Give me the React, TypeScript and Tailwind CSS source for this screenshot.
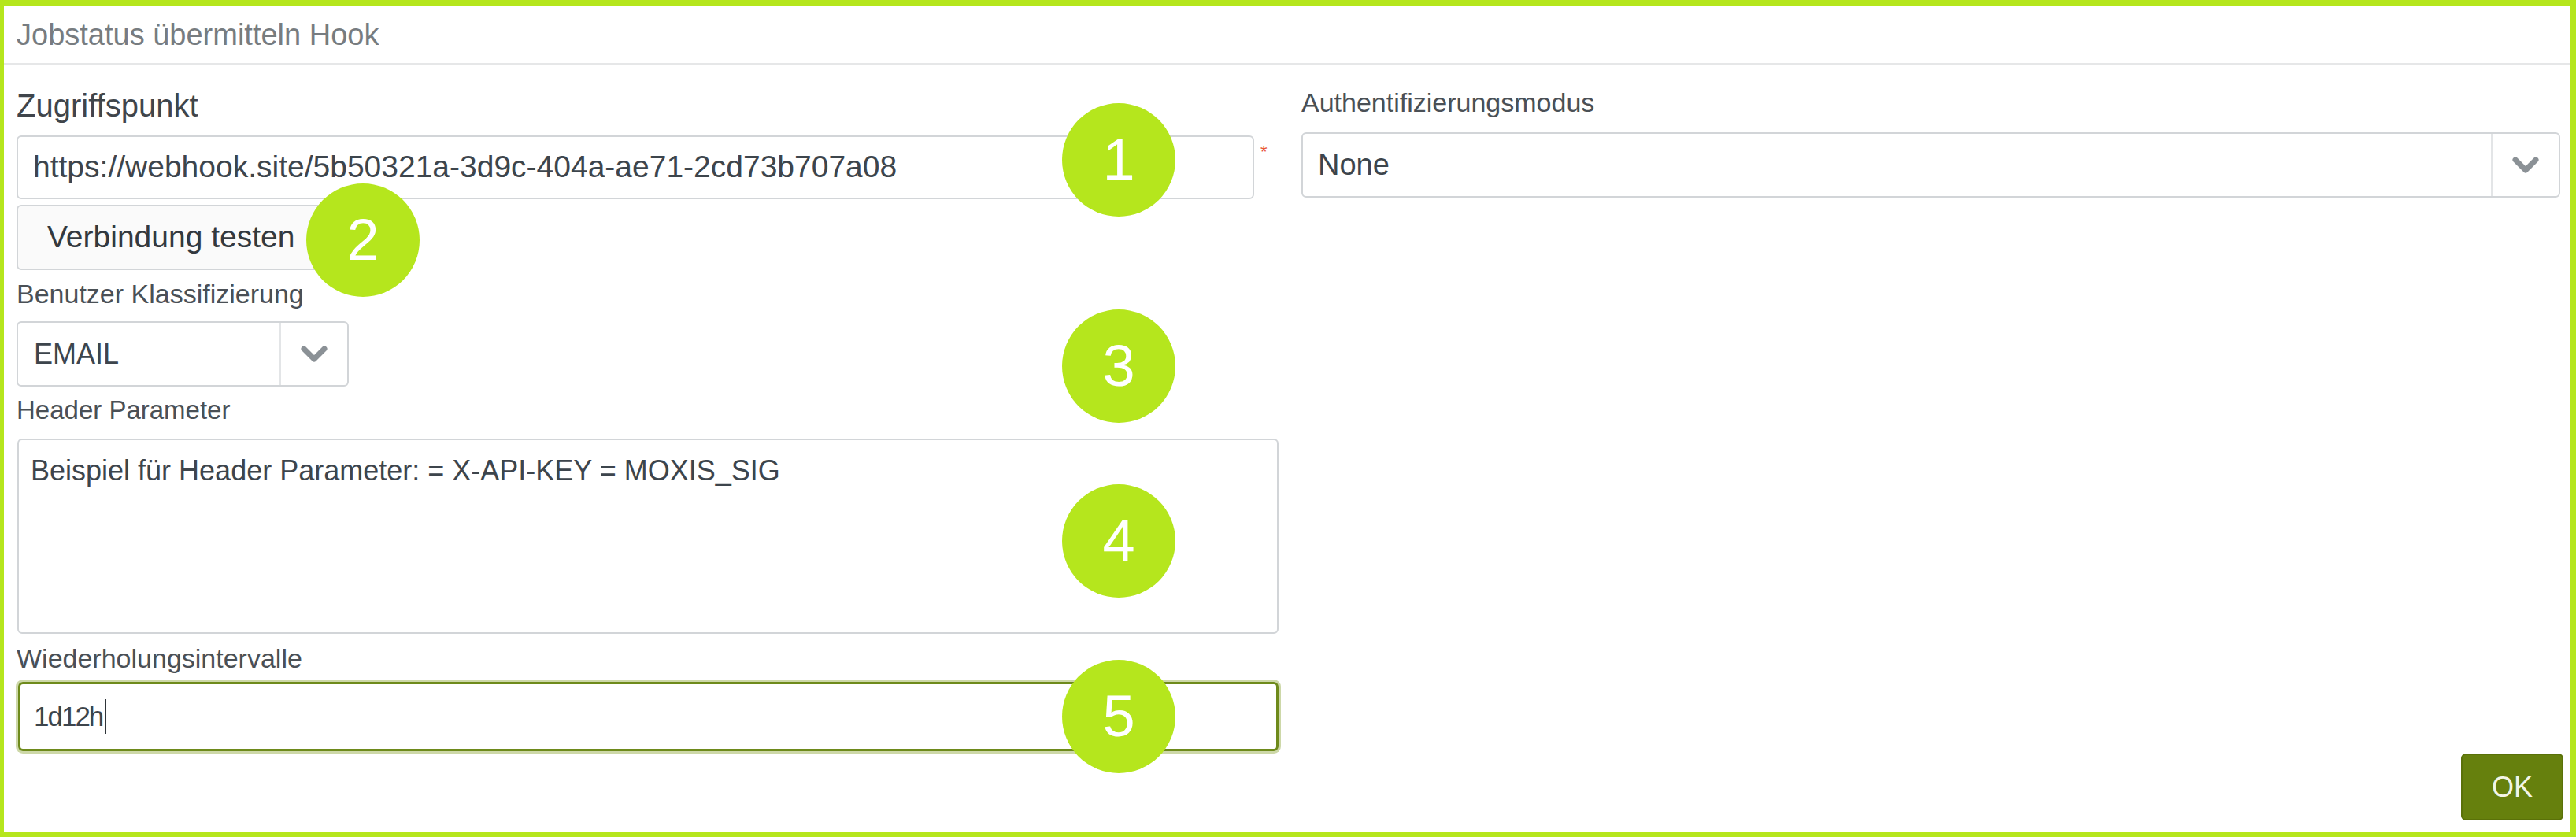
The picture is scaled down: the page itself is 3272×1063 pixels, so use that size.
import React from 'react';

const LIME = 'bg-[#b5e61d]';

function Chevron() {
  return (
    <svg width="36" height="24" viewBox="0 0 36 24" fill="none">
      <path d="M5 5 L18 18 L31 5" stroke="#8b9196" strokeWidth="7" strokeLinecap="round" strokeLinejoin="round" />
    </svg>
  );
}

function Marker({ n, className }: { n: number; className: string }) {
  return (
    <div
      className={`absolute w-[144px] h-[144px] rounded-full ${LIME} flex items-center justify-center text-white text-[74px] leading-none ${className}`}
    >
      {n}
    </div>
  );
}

export default function App() {
  return (
    <div
      className="relative w-[3272px] h-[1063px] bg-white border-[#b5e61d] border-t-[7px] border-l-[5px] border-r-[7px] border-b-[6px] flex flex-col text-[#3d454c]"
      style={{ fontFamily: '"Liberation Sans", Arial, sans-serif' }}
    >
      {/* header */}
      <div className="h-[75px] shrink-0 border-b-2 border-[#e6e7e8] flex items-center pl-[16px] pt-[2px]">
        <span className="text-[38px] text-[#777c80]">Jobstatus übermitteln Hook</span>
      </div>

      {/* body */}
      <div className="flex-1 flex pl-[16px] pr-[9px] pb-[15px]">
        {/* left column */}
        <div className="w-[1607px] flex flex-col pt-[30px]">
          <div className="h-[44px] leading-[44px] text-[40px] text-[#3f454b] mb-[16px]">Zugriffspunkt</div>
          <div className="flex">
            <div className="w-[1572px] h-[81px] border-2 border-[#d2d5d8] rounded-[6px] flex items-center px-[19px] text-[39px]">
              https://webhook.site/5b50321a-3d9c-404a-ae71-2cd73b707a08
            </div>
            <span className="ml-[8px] mt-[10px] text-[#e8553a] text-[22px] leading-none">*</span>
          </div>
          <div className="mt-[7px] w-[410px] h-[83px] border-2 border-[#d2d5d8] rounded-[6px] bg-[#fafafa] flex items-center pl-[37px] text-[39px] text-[#33393f]">
            Verbindung testen
          </div>
          <div className="mt-[10px] h-[40px] leading-[40px] text-[34px] text-[#4a5056]">Benutzer Klassifizierung</div>
          <div className="mt-[15px] w-[422px] h-[83px] border-2 border-[#d2d5d8] rounded-[6px] flex">
            <div className="flex-1 flex items-center pl-[20px] text-[36px]">EMAIL</div>
            <div className="w-[86px] border-l-2 border-[#e3e5e7] flex items-center justify-center">
              <Chevron />
            </div>
          </div>
          <div className="mt-[10px] h-[40px] leading-[40px] text-[33px] text-[#4a5056]">Header Parameter</div>
          <div className="mt-[16px] ml-[1px] w-[1602px] h-[248px] border-2 border-[#d2d5d8] rounded-[6px] px-[15px] pt-[17px] text-[36px] leading-[44px]">
            Beispiel für Header Parameter: = X-API-KEY = MOXIS_SIG
          </div>
          <div className="mt-[11px] h-[40px] leading-[40px] text-[34px] text-[#4a5056]">Wiederholungsintervalle</div>
          <div className="mt-[10px] w-[1601px] ml-[2px] h-[88px] border-[3px] border-[#6e8a1b] rounded-[6px] shadow-[0_0_0_3px_#cdd8a8] flex items-center pl-[17px] text-[35px] tracking-[-2px]">
            <span>1d12h</span>
            <span className="ml-[3px] w-[2px] h-[44px] bg-[#2f3539]" />
          </div>
        </div>

        {/* right column */}
        <div className="flex-1 ml-[25px] flex flex-col pt-[28px]">
          <div className="h-[40px] leading-[40px] text-[34px] text-[#4a5056] mb-[18px]">Authentifizierungsmodus</div>
          <div className="mr-[4px] h-[83px] border-2 border-[#d2d5d8] rounded-[6px] flex">
            <div className="flex-1 flex items-center pl-[19px] text-[38px]">None</div>
            <div className="w-[86px] border-l-2 border-[#e3e5e7] flex items-center justify-center">
              <Chevron />
            </div>
          </div>
          <div className="mt-auto self-end w-[130px] h-[85px] rounded-[6px] bg-[#66800d] border-2 border-[#5a7109] flex items-center justify-center text-[36px] text-[#f3f5e6]">
            OK
          </div>
        </div>
      </div>

      <Marker n={1} className="left-[1344px] top-[124px]" />
      <Marker n={2} className="left-[384px] top-[226px]" />
      <Marker n={3} className="left-[1344px] top-[386px]" />
      <Marker n={4} className="left-[1344px] top-[608px]" />
      <Marker n={5} className="left-[1344px] top-[831px]" />
    </div>
  );
}
